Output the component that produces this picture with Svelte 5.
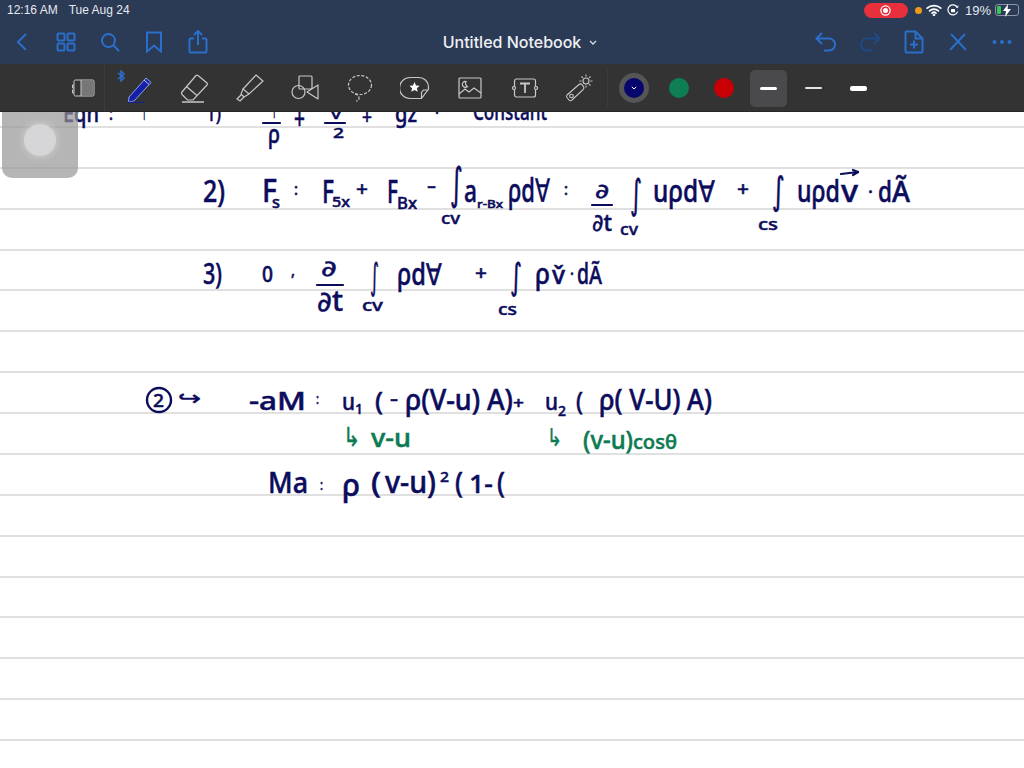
<script>
  const ink = '#0c0c5c';
  const green = '#0d7a52';

  // handwriting on the notebook page: x, baseline (page coords), text, width, font size
  const notes = [
    [63, 10, 'Eqn', 36, 24], [109, 8, ':', 4, 18], [142, 8, '1', 4, 18],
    [206, 9, '1)', 15, 22], [272, 6, '1', 4, 14], [268, 31, 'ρ', 12, 26], [294, 17, '+', 11, 28], [331, 7, 'v', 10, 14], [333, 26, '2', 11, 15],
    [362, 12, '+', 10, 20], [395, 10, 'gz', 22, 24], [435, 7, '·', 4, 18], [473, 8, 'Constant', 74, 24],

    [203, 90, '2)', 22, 30], [262, 90, 'F', 15, 32], [272, 96, 's', 8, 17], [294, 83, ':', 4, 16],
    [322, 91, 'F', 12, 32], [332, 95, '5x', 18, 15], [356, 84, '+', 12, 20], [387, 91, 'F', 11, 32],
    [397, 97, 'Bx', 20, 17], [427, 80, '-', 9, 18], [450, 87, '∫', 13, 44], [441, 112, 'cv', 19, 17],
    [464, 90, 'a', 13, 30], [477, 96, 'r-Bx', 26, 11], [508, 90, 'ρd∀', 42, 32], [564, 83, ':', 4, 16],
    [630, 96, '∫', 12, 40], [620, 123, 'cv', 18, 17], [653, 90, 'uρd∀', 62, 30], [737, 84, '+', 12, 20],
    [772, 92, '∫', 13, 38], [758, 118, 'cs', 20, 17], [797, 90, 'uρd', 43, 30], [841, 90, 'v', 17, 30],
    [868, 86, '·', 5, 18], [878, 90, 'd', 14, 28], [892, 90, 'Ã', 18, 28],

    [203, 172, '3)', 19, 28], [262, 170, '0', 11, 22], [291, 164, ',', 4, 16],
    [370, 177, '∫', 9, 36], [362, 199, 'cv', 21, 17], [397, 173, 'ρd∀', 45, 30], [475, 168, '+', 12, 20],
    [510, 177, '∫', 12, 36], [498, 203, 'cs', 19, 17], [535, 172, 'ρ', 15, 28], [552, 172, 'v̌', 13, 26],
    [570, 168, '·', 4, 18], [577, 172, 'd', 12, 28], [589, 172, 'Ã', 13, 26],

    [178, 293, '↪', 23, 20], [249, 298, '-aM', 57, 25], [316, 292, ':', 3, 14],
    [342, 298, 'u', 13, 24], [355, 302, '1', 8, 14], [375, 298, '(', 8, 26], [390, 293, '-', 8, 18],
    [405, 298, 'ρ(V-u) A)', 108, 28], [513, 297, '+', 11, 17],
    [545, 298, 'u', 13, 24], [558, 304, '2', 8, 14], [576, 298, '(', 7, 26], [599, 298, 'ρ( V-U) A)', 113, 28],

    [268, 381, 'Ma', 40, 29], [320, 378, ':', 3, 14], [342, 384, 'ρ', 18, 30], [371, 381, '(', 10, 28],
    [385, 381, 'v-u)', 51, 30], [440, 370, '2', 9, 15], [455, 381, '(', 8, 28], [469, 381, '1-', 24, 26],
    [497, 381, '(', 8, 28]
  ];

  const greenNotes = [
    [343, 334, '↳', 17, 26], [371, 335, 'v-u', 40, 25], [547, 334, '↳', 15, 24],
    [583, 337, '(v-u)', 50, 25], [633, 337, 'cosθ', 44, 19]
  ];

  const bars = [
    [263, 11, 280, 11], [325, 11, 345, 11], [592, 93, 612, 93], [317, 173, 343, 173],
    [841, 62, 858, 60], [853, 58, 858, 60], [853, 63, 858, 60]
  ];

  // the ∂ over ∂t fractions sit apart from the running text
  const partials = [
    [595, 86, '∂', 14, 20], [592, 119, '∂t', 20, 24], [321, 164, '∂', 16, 22], [317, 199, '∂t', 26, 28]
  ];

  const widths = ['mid', 'thin', 'fat'];
</script>

<div class="screen">
  <header class="top">
    <div class="status">
      <span>12:16 AM</span>
      <span class="date">Tue Aug 24</span>
      <div class="status-right">
        <span class="rec"><i></i></span>
        <span class="dot"></span>
        <svg width="16" height="12" viewBox="0 0 16 12" fill="none" stroke="#fff" stroke-width="1.7" stroke-linecap="round">
          <path d="M1.2 4.2a10 10 0 0 1 13.6 0M3.600 6.800a6.400 6.400 0 0 1 8.800 0M6 9.100a3 3 0 0 1 4 0" />
          <circle cx="8" cy="10.800" r=".5" />
        </svg>
        <svg class="lock" width="12" height="12" viewBox="0 0 12 12" fill="none" stroke="#fff" stroke-width="1.200">
          <path d="M10.600 7.600A5 5 0 1 1 10.400 3.600" />
          <path d="M8.600 2.400l2 1.400.4-2.200" stroke-width="1" />
          <rect x="4" y="5" width="4" height="3.200" rx=".6" fill="#fff" stroke="none" />
        </svg>
        <span class="pct">19%</span>
        <span class="battery">
          <i></i>
          <svg width="10" height="13" viewBox="0 0 10 13"><path d="M6 0L1 7h3l-1 6 6-8H5.600z" fill="#fff" /></svg>
        </span>
      </div>
    </div>

    <nav class="nav">
      <div class="nav-group">
        <button aria-label="Back">
          <svg width="14" height="20" viewBox="0 0 14 20"><path d="M11 2L3 10l8 8" /></svg>
        </button>
        <button aria-label="Pages">
          <svg width="20" height="20" viewBox="0 0 20 20">
            <rect x="1.500" y="1.500" width="7" height="7" rx="1" /><rect x="11.500" y="1.500" width="7" height="7" rx="1" />
            <rect x="1.500" y="11.500" width="7" height="7" rx="1" /><rect x="11.500" y="11.500" width="7" height="7" rx="1" />
          </svg>
        </button>
        <button aria-label="Search">
          <svg width="20" height="20" viewBox="0 0 20 20"><circle cx="8.500" cy="8.500" r="6.500" /><path d="M13.300 13.300L19 19" /></svg>
        </button>
        <button aria-label="Bookmark">
          <svg width="18" height="22" viewBox="0 0 18 22"><path d="M2 1.500h14v19l-7-6-7 6z" /></svg>
        </button>
        <button aria-label="Share">
          <svg width="20" height="24" viewBox="0 0 20 24"><path d="M6 8.500H2.500a1 1 0 0 0-1 1v12a1 1 0 0 0 1 1h15a1 1 0 0 0 1-1v-12a1 1 0 0 0-1-1H14M10 15V1.500M6 5l4-4 4 4" /></svg>
        </button>
      </div>
      <div class="title">
        Untitled Notebook
        <svg width="8" height="5" viewBox="0 0 8 5" fill="none" stroke="#d8dce4" stroke-width="1.300"><path d="M1 1l3 3 3-3" /></svg>
      </div>
      <div class="nav-group right">
        <button aria-label="Undo">
          <svg width="22" height="20" viewBox="0 0 22 20"><path d="M7 1L1.500 6.500 7 12M2 6.500h12a6 6 0 0 1 0 12H9" /></svg>
        </button>
        <button class="dim" aria-label="Redo">
          <svg width="22" height="20" viewBox="0 0 22 20"><path d="M15 1l5.500 5.500L15 12M20 6.500H8a6 6 0 0 0 0 12h5" /></svg>
        </button>
        <button aria-label="Add page">
          <svg width="20" height="24" viewBox="0 0 20 24"><path d="M2.500 1.500h9l7 7v13a1 1 0 0 1-1 1h-15a1 1 0 0 1-1-1v-19a1 1 0 0 1 1-1zM11.500 1.500v7h7M10 10.500v8M6 14.500h8" /></svg>
        </button>
        <button aria-label="Close pen">
          <svg width="20" height="20" viewBox="0 0 20 20"><path d="M3 2l15 16M17 2L2 18" /></svg>
        </button>
        <button aria-label="More">
          <svg width="20" height="6" viewBox="0 0 20 6"><circle class="fill" cx="2.500" cy="3" r="2" /><circle class="fill" cx="10" cy="3" r="2" /><circle class="fill" cx="17.500" cy="3" r="2" /></svg>
        </button>
      </div>
    </nav>
  </header>

  <div class="toolbar">
    <div class="thumb">
      <svg width="24" height="20" viewBox="0 0 24 20" fill="none" stroke="#c8c8c8" stroke-width="1">
        <rect x="3" y="2" width="20" height="16" rx="1.500" />
        <rect x="10" y="3" width="12" height="14" fill="#777" stroke="none" />
        <path d="M10 2v16M3 7H1.500v3H3M3 12H1.500v3H3" />
      </svg>
    </div>
    <div class="tool">
      <span class="bt">
        <svg width="8" height="12" viewBox="0 0 8 12" fill="none" stroke="#2a6fd0" stroke-width="1.500"><path d="M1 3l6 5-3 3V1l3 3-6 5" /></svg>
      </span>
      <svg width="28" height="30" viewBox="0 0 28 30">
        <path d="M3 24L20 5l5 4.500L8 28l-5.500 1z" fill="#1420a8" stroke="#8fa4e0" stroke-width="1" />
        <path d="M18 7l5 4.500" stroke="#c5d0ee" stroke-width="1" />
        <path d="M2 29.500h16" stroke="#14208a" stroke-width="1.500" />
      </svg>
    </div>
    <div class="tool">
      <svg width="32" height="30" viewBox="0 0 32 30" fill="none" stroke="#c8c8c8" stroke-width="1.200">
        <path d="M3 19L17 2.500a1.500 1.500 0 0 1 2 0l9 7.500a1.500 1.500 0 0 1 0 2L14 27H8.500L3.500 22a2 2 0 0 1-.5-3zM8 14l10 8.500" />
        <path d="M3 29h22" stroke-width="1.500" />
      </svg>
    </div>
    <div class="tool">
      <svg width="30" height="28" viewBox="0 0 30 28" fill="none" stroke="#c8c8c8" stroke-width="1.200">
        <path d="M21 1l7 6L14 20l-6-5zM8 15l-2 5 3 3 5-3M6 21l-4 4 3 2 4-4" />
      </svg>
    </div>
    <div class="tool">
      <svg width="28" height="26" viewBox="0 0 28 26" fill="none" stroke="#c8c8c8" stroke-width="1.200">
        <rect x="8" y="1" width="13" height="13" rx="1" />
        <circle cx="7.500" cy="17" r="6.500" />
        <path d="M27 10v14l-11-7z" stroke-linejoin="round" />
      </svg>
    </div>
    <div class="tool">
      <svg width="26" height="28" viewBox="0 0 26 28" fill="none" stroke="#c8c8c8" stroke-width="1.200" stroke-dasharray="3 1.600">
        <ellipse cx="13" cy="11" rx="11.500" ry="9.500" />
        <path d="M8 20q4 1 4 4t-3 3" />
      </svg>
    </div>
    <div class="tool">
      <svg width="30" height="24" viewBox="0 0 30 24" fill="none" stroke="#c8c8c8" stroke-width="1.200">
        <path d="M10 1.500h9a9.500 9.500 0 0 1 9.500 9.500v2l-7 9.500H10a10.500 10.500 0 0 1 0-21zM28.500 14h-5l-2 2.500v6" />
        <path d="M14.500 6l1.500 3.500 3.600.3-2.700 2.400.8 3.600-3.200-1.900-3.200 1.900.8-3.600-2.700-2.400 3.600-.3z" fill="#fff" stroke="none" />
      </svg>
    </div>
    <div class="tool">
      <svg width="24" height="22" viewBox="0 0 24 22" fill="none" stroke="#c8c8c8" stroke-width="1.200">
        <rect x="1" y="1" width="22" height="20" rx="1" />
        <path d="M1 17l6-5 4 3 5-4 7 5" />
        <path d="M8 4.500a3 3 0 1 0 1.500 5 3.500 3.500 0 0 1-1.500-5z" />
      </svg>
    </div>
    <div class="tool">
      <svg width="26" height="20" viewBox="0 0 26 20" fill="none" stroke="#c8c8c8" stroke-width="1.200">
        <rect x="2.500" y="1" width="21" height="18" rx="2" />
        <circle cx="2" cy="10" r="1.500" fill="#333" /><circle cx="24" cy="10" r="1.500" fill="#333" />
        <path d="M8 5.500h10M13 5.500V15" stroke-width="1.800" />
      </svg>
    </div>
    <div class="tool">
      <svg width="30" height="30" viewBox="0 0 30 30" fill="none" stroke="#c8c8c8" stroke-width="1.100">
        <path d="M2 22L14 11.500a2 2 0 0 1 3 .2l1.500 2a2 2 0 0 1-.2 2.600L7 27a2 2 0 0 1-3 0l-2-2.500a2 2 0 0 1 0-2.500z" />
        <circle cx="6.500" cy="23" r="1.800" />
        <circle cx="21" cy="8" r="3" />
        <path d="M21 1.500v2M21 12.500v2M14.500 8h2M25.500 8h2M16.500 3.500l1.400 1.400M24.100 11.100l1.400 1.400M25.500 3.500l-1.400 1.400" />
      </svg>
    </div>
    <span class="sep"></span>
    <div class="swatch">
      <span class="current"><svg width="6" height="4" viewBox="0 0 6 4" fill="none" stroke="#fff" stroke-width="1"><path d="M.8.800L3 3 5.200.800" /></svg></span>
    </div>
    <div class="swatch"><span class="color green"></span></div>
    <div class="swatch"><span class="color red"></span></div>
    {#each widths as w}
      <div class="swatch" class:picked={w === 'mid'}><span class="stroke {w}"></span></div>
    {/each}
  </div>

  <main class="page">
    <svg class="ink" width="1024" height="656" viewBox="0 0 1024 656">
      {#each bars as [x1, y1, x2, y2]}
        <line {x1} {y1} {x2} {y2} stroke={ink} stroke-width="2.200" stroke-linecap="round" />
      {/each}
      <circle cx="159" cy="288" r="12" fill="none" stroke={ink} stroke-width="2.400" />
      <text x="153" y="295" font-size="18" fill={ink} stroke={ink} textLength="11" lengthAdjust="spacingAndGlyphs">2</text>
      {#each [...notes, ...partials] as [x, y, text, len, size]}
        <text {x} {y} font-size={size} fill={ink} stroke={ink} textLength={len} lengthAdjust="spacingAndGlyphs">{text}</text>
      {/each}
      {#each greenNotes as [x, y, text, len, size]}
        <text {x} {y} font-size={size} fill={green} stroke={green} textLength={len} lengthAdjust="spacingAndGlyphs">{text}</text>
      {/each}
    </svg>
    <div class="float"><span></span></div>
  </main>
</div>

<style>
  :global(body) {
    margin: 0;
    background: #fff;
  }

  .screen {
    width: 1024px;
    height: 768px;
    overflow: hidden;
    display: flex;
    flex-direction: column;
    font-family: "Liberation Sans", Arial, sans-serif;
  }

  .top {
    background: #2b3a55;
    color: #fff;
  }

  .status {
    height: 20px;
    padding: 0 5px 0 7px;
    display: flex;
    align-items: center;
    font-size: 12px;
    color: #e6e9ef;
  }

  .date {
    margin-left: 11px;
  }

  .status-right {
    margin-left: auto;
    display: flex;
    align-items: center;
  }

  .rec {
    width: 44px;
    height: 15px;
    border-radius: 8px;
    background: #e8303c;
    display: flex;
    align-items: center;
    justify-content: center;
  }

  .rec i {
    width: 5px;
    height: 5px;
    border-radius: 50%;
    background: #fff;
    box-shadow: 0 0 0 1.500px #e8303c, 0 0 0 2.700px #fff;
  }

  .dot {
    width: 7px;
    height: 7px;
    border-radius: 50%;
    background: #f09a1c;
    margin-left: 7px;
  }

  .status-right svg {
    margin-left: 4px;
  }

  .status-right .lock {
    margin-left: 5px;
  }

  .pct {
    margin-left: 6px;
    font-size: 13px;
  }

  .battery {
    position: relative;
    width: 22px;
    height: 10px;
    margin-left: 4px;
    border: 1px solid #8d95a6;
    border-radius: 3px;
    display: flex;
    align-items: center;
    justify-content: center;
  }

  .battery i {
    position: absolute;
    left: 1px;
    top: 1px;
    bottom: 1px;
    width: 4px;
    background: #35c759;
    border-radius: 1px;
  }

  .battery svg {
    margin: 0;
  }

  .nav {
    height: 44px;
    display: grid;
    grid-template-columns: 1fr auto 1fr;
    align-items: center;
  }

  .nav-group {
    display: flex;
  }

  .nav-group.right {
    justify-content: flex-end;
  }

  .nav button {
    width: 44px;
    height: 44px;
    padding: 0;
    border: 0;
    background: none;
    display: flex;
    align-items: center;
    justify-content: center;
  }

  .nav button svg {
    fill: none;
    stroke: #2a6fc9;
    stroke-width: 2;
  }

  .nav button svg .fill {
    fill: #2a6fc9;
    stroke: none;
  }

  .nav button.dim svg {
    stroke: #1f4b85;
  }

  .title {
    padding-left: 16px;
    font-family: Inter, "Liberation Sans", sans-serif;
    font-size: 16px;
    font-weight: 500;
    color: #eef0f4;
    display: flex;
    align-items: center;
    gap: 8px;
    white-space: nowrap;
  }

  .toolbar {
    height: 48px;
    padding-left: 61px;
    background: #333333;
    display: flex;
    align-items: center;
    flex: none;
    box-shadow: inset 0 -1px 0 #262626;
  }

  .thumb {
    width: 44px;
    height: 48px;
    margin-right: 7px;
    border-right: 1px solid #3a3a3a;
    box-sizing: border-box;
    display: flex;
    align-items: center;
    justify-content: center;
  }

  .tool {
    position: relative;
    width: 55px;
    height: 48px;
    display: flex;
    align-items: center;
    justify-content: center;
  }

  .bt {
    position: absolute;
    left: 5px;
    top: 6px;
    line-height: 0;
  }

  .sep {
    width: 1px;
    height: 40px;
    margin-right: 3px;
    background: #3a3a3a;
  }

  .swatch {
    width: 37px;
    height: 37px;
    margin: 0 4px;
    border-radius: 5px;
    display: flex;
    align-items: center;
    justify-content: center;
  }

  .swatch.picked {
    background: #4a4a4c;
  }

  .current {
    width: 20px;
    height: 20px;
    border-radius: 50%;
    background: #06066e;
    box-shadow: 0 0 0 5px #555;
    display: flex;
    align-items: center;
    justify-content: center;
  }

  .color {
    width: 20px;
    height: 20px;
    border-radius: 50%;
  }

  .green {
    background: #0d7f52;
  }

  .red {
    background: #c80006;
  }

  .stroke {
    width: 17px;
    background: #fff;
    border-radius: 2px;
  }

  .stroke.mid {
    height: 3px;
  }

  .stroke.thin {
    height: 2px;
    background: #e4e4e4;
  }

  .stroke.fat {
    height: 5px;
  }

  .page {
    position: relative;
    flex: 1;
    overflow: hidden;
    background: repeating-linear-gradient(
      to bottom,
      #fff -24.870px,
      #fff 14px,
      #e0e0e0 14px,
      #e0e0e0 16px
    );
  }

  .ink {
    display: block;
    font-family: "Noto Sans", "DejaVu Sans", sans-serif;
    font-weight: 500;
    stroke-width: 0.5px;
  }

  .float {
    position: absolute;
    left: 2px;
    top: 0;
    width: 76px;
    height: 66px;
    border-radius: 0 0 10px 10px;
    background: rgba(150, 150, 150, 0.7);
    display: flex;
    align-items: center;
    justify-content: center;
    padding-bottom: 10px;
    box-sizing: border-box;
  }

  .float span {
    width: 32px;
    height: 32px;
    border-radius: 50%;
    background: #d6d6d8;
    box-shadow: 0 0 6px 2px rgba(214, 214, 216, 0.6);
  }
</style>
